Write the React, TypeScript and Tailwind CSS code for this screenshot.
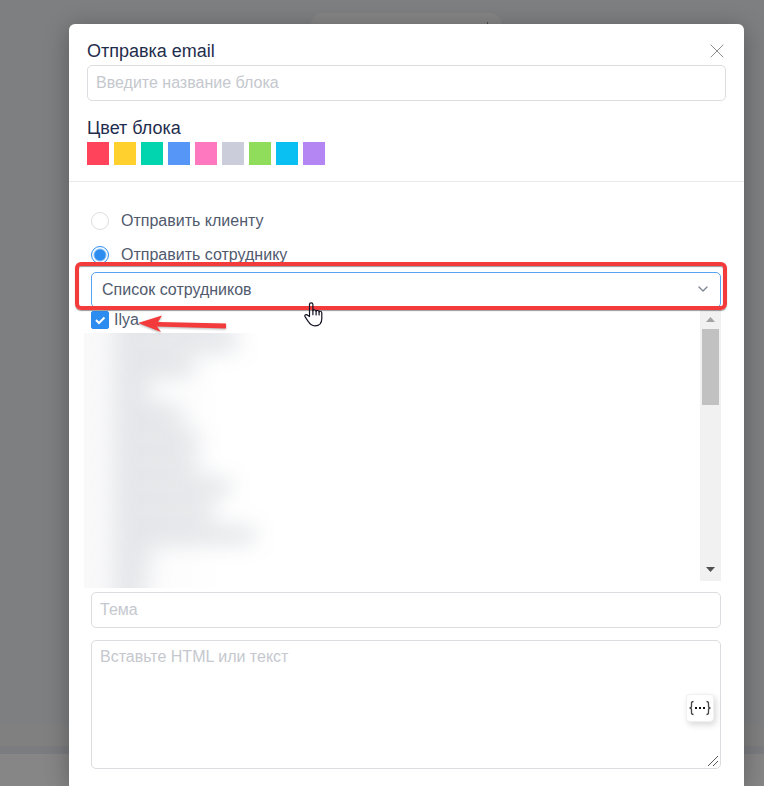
import { useState } from "react";
import { ChevronDown, X } from "lucide-react";

const blockColors = [
  { name: "Красный", className: "bg-[#ff435a]" },
  { name: "Жёлтый", className: "bg-[#ffd02e]" },
  { name: "Бирюзовый", className: "bg-[#00d5b0]" },
  { name: "Синий", className: "bg-[#5596f7]" },
  { name: "Розовый", className: "bg-[#fd78be]" },
  { name: "Серый", className: "bg-[#cbcdda]" },
  { name: "Зелёный", className: "bg-[#90dc5b]" },
  { name: "Голубой", className: "bg-[#0ac0f2]" },
  { name: "Фиолетовый", className: "bg-[#b486f3]" },
];

// widths of the hidden employee names, px
const hiddenNames = [120, 124, 80, 36, 68, 84, 84, 116, 100, 140, 36, 32, 32];

const fieldClass =
  "block w-full rounded-[5px] border border-[#dcdde1] bg-white px-2 text-base text-[#515a6e] outline-none placeholder:text-[#c5c8ce]";

function Canvas() {
  return (
    <div className="absolute inset-0 flex flex-col bg-[#7d7f81]">
      <div className="flex flex-1 items-start justify-center pt-[13px] pr-5 pl-[69px]">
        <div className="flex h-12 w-[191px] justify-end rounded-xl bg-[#858585] px-[14px] pt-[9px]">
          <span className="h-3 w-px bg-[#4c4c4c]" />
        </div>
      </div>
      <div className="h-[21px] bg-[#808080]" />
      <div className="h-2 bg-[#7a7c7f]" />
      <div className="h-8 bg-[#868686]" />
    </div>
  );
}

function HiddenEmployees() {
  return (
    <div
      className="-ml-[7px] h-[255px] w-[240px] overflow-hidden bg-linear-to-r from-[#f9f9fa] to-white to-60%"
      aria-hidden="true"
    >
      <div className="-mt-5 flex flex-col gap-3 pl-[30px] blur-[11px]">
        {hiddenNames.map((width, i) => (
          <div key={i} className="h-3 shrink-0 bg-[#515a6e]/25" style={{ width }} />
        ))}
      </div>
    </div>
  );
}

function Scrollbar() {
  return (
    <div className="flex h-[273px] w-[21px] flex-col items-center bg-[#f1f1f1]" aria-hidden="true">
      <svg className="mt-[9px] h-[5px] w-[9px]" viewBox="0 0 9 5">
        <path d="M4.5 0 9 5H0z" fill="#a3a3a3" />
      </svg>
      <div className="mt-[7px] h-[76px] w-[17px] bg-[#c1c1c1]" />
      <svg className="mt-auto mb-[9px] h-[5px] w-[9px]" viewBox="0 0 9 5">
        <path d="M0 0h9L4.5 5z" fill="#505050" />
      </svg>
    </div>
  );
}

function HandCursor() {
  return (
    <svg
      className="absolute top-[30px] left-[213px] h-[25px] w-[19px]"
      viewBox="0 0 19 25"
      fill="none"
      stroke="#111122"
      strokeWidth="1.2"
      strokeLinecap="round"
      strokeLinejoin="round"
      aria-hidden="true"
    >
      <path d="M5.5 14.5V2.5a1.7 1.7 0 0 1 3.4 0v6.2c0-1.4 3.2-1.3 3.2.6 0-1.2 3-1.2 3 .6 0-1 2.7-1 2.7 1v5.6c0 4.400-2.600 7.300-6.800 7.300-3.600 0-5-1.500-6.500-4L1.300 15.200c-1.400-2.300 1-3.300 2.400-2z" />
      <path d="M8.900 8.700v4M12.100 9.300v3.600M15.100 10v3" />
    </svg>
  );
}

function Arrow() {
  return (
    <svg
      className="pointer-events-none absolute top-[6px] left-[47px] h-[20px] w-[90px] drop-shadow-[0_1px_1px_rgba(0,0,0,0.3)]"
      viewBox="0 0 90 20"
      aria-hidden="true"
    >
      <path d="M0 9 24 1.500l-4 6.500L88 9.500v5L19 12.500 23 18z" fill="#f43b3b" />
    </svg>
  );
}

function App() {
  const [recipient, setRecipient] = useState("employee");
  const [ilya, setIlya] = useState(true);

  const radioClass =
    "size-[18px] appearance-none rounded-full border border-[#dcdee2] bg-white checked:border-[#2d8cf0] checked:bg-[radial-gradient(circle,#2d8cf0_5px,white_7px)]";

  return (
    <main className="relative flex min-h-screen flex-col overflow-hidden font-['Liberation_Sans',Arial,sans-serif] text-base text-[#515a6e]">
      <Canvas />
      <section
        className="relative mt-6 mr-5 ml-[69px] flex-1 rounded-t-md bg-white shadow-[0_4px_24px_rgba(0,0,0,0.3)]"
        role="dialog"
        aria-label="Отправка email"
      >
        <header className="border-b border-[#e8eaec] px-[18px] pt-[15px] pb-4">
          <div className="mb-0.5 flex h-6 items-center justify-between">
            <label htmlFor="block-name" className="text-lg leading-6 text-[#1f2d4d]">
              Отправка email
            </label>
            <button type="button" aria-label="Закрыть" className="-mr-[3px] text-[#8c8c8c]">
              <X size={24} strokeWidth={1} />
            </button>
          </div>
          <input id="block-name" className={`${fieldClass} h-9`} placeholder="Введите название блока" />
          <h2 className="mt-[15px] mb-0.5 text-lg leading-6 text-[#1f2d4d]">Цвет блока</h2>
          <div className="flex gap-[5px]">
            {blockColors.map((color) => (
              <button
                key={color.name}
                type="button"
                aria-label={color.name}
                className={`h-[23px] w-[22px] ${color.className}`}
              />
            ))}
          </div>
        </header>

        <form className="pt-[27px] pr-[23px] pb-4 pl-[22px]">
          <label className="mb-2.5 flex h-6 items-center gap-3">
            <input
              type="radio"
              name="recipient"
              className={radioClass}
              checked={recipient === "client"}
              onChange={() => setRecipient("client")}
            />
            Отправить клиенту
          </label>
          <label className="mb-[5px] flex h-6 items-center gap-3">
            <input
              type="radio"
              name="recipient"
              className={radioClass}
              checked={recipient === "employee"}
              onChange={() => setRecipient("employee")}
            />
            Отправить сотруднику
          </label>

          <div className="relative z-10">
            <select
              aria-label="Список сотрудников"
              className="block h-9 w-full appearance-none rounded-[5px] border border-[#57a3f3] bg-white px-2.5 text-base text-[#515a6e] outline-none"
            >
              <option>Список сотрудников</option>
            </select>
            <ChevronDown
              size={16}
              strokeWidth={2}
              className="pointer-events-none absolute top-[9px] right-2.5 text-[#808695]"
            />
            <div className="pointer-events-none absolute -top-2.5 -right-1.5 -bottom-0.5 -left-4 rounded-md border-4 border-[#f43b3b] shadow-[0_1px_1px_rgba(0,0,0,0.4),inset_0_1px_1px_rgba(0,0,0,0.4)]" />
            <HandCursor />
          </div>

          <div className="flex h-[280px] justify-between">
            <div className="relative">
              <label className="mb-px flex h-6 items-center gap-[5px]">
                <input
                  type="checkbox"
                  className="peer size-[18px] appearance-none rounded-xs border border-[#dcdee2] checked:border-[#2d8cf0] checked:bg-[#2d8cf0]"
                  checked={ilya}
                  onChange={(e) => setIlya(e.target.checked)}
                />
                <svg
                  className="pointer-events-none absolute left-0 hidden size-[18px] peer-checked:block"
                  viewBox="0 0 18 18"
                  fill="none"
                  stroke="white"
                  strokeWidth="2"
                >
                  <path d="m5 9 3 3 5.500-5.500" />
                </svg>
                Ilya
              </label>
              <Arrow />
              <HiddenEmployees />
            </div>
            <Scrollbar />
          </div>

          <input aria-label="Тема" className={`${fieldClass} mt-1 h-9`} placeholder="Тема" />

          <div className="relative mt-3">
            <textarea
              aria-label="Текст письма"
              className={`${fieldClass} h-[129px] resize-y py-1 leading-6`}
              placeholder="Вставьте HTML или текст"
            />
            <svg
              className="pointer-events-none absolute right-0.5 bottom-0.5 size-3 bg-white"
              viewBox="0 0 12 12"
              stroke="#555"
              aria-hidden="true"
            >
              <path d="M1 11 11 1M6 11l5-5" />
            </svg>
            <button
              type="button"
              aria-label="Вставить переменную"
              className="absolute right-[7px] bottom-[47px] flex h-7 w-7 items-center justify-center rounded-sm border border-[#f0f0f0] bg-white text-[#444] shadow-[2px_3px_6px_rgba(0,0,0,0.15)]"
            >
              <svg className="h-4 w-6 shrink-0" viewBox="0 0 24 16" fill="none" stroke="currentColor" strokeWidth="1.3">
                <path d="M5.500 1.500c-2 0-2 .8-2 2v2.500c0 1.300-.5 2-2 2 1.500 0 2 .7 2 2v2.500c0 1.200 0 2 2 2M18.500 1.500c2 0 2 .8 2 2v2.500c0 1.300.5 2 2 2-1.500 0-2 .7-2 2v2.500c0 1.200 0 2-2 2" />
                <path d="M7 8h2M11 8h2M15 8h2" strokeWidth="2" stroke="#111" />
              </svg>
            </button>
          </div>
        </form>
      </section>
    </main>
  );
}

export default App;
